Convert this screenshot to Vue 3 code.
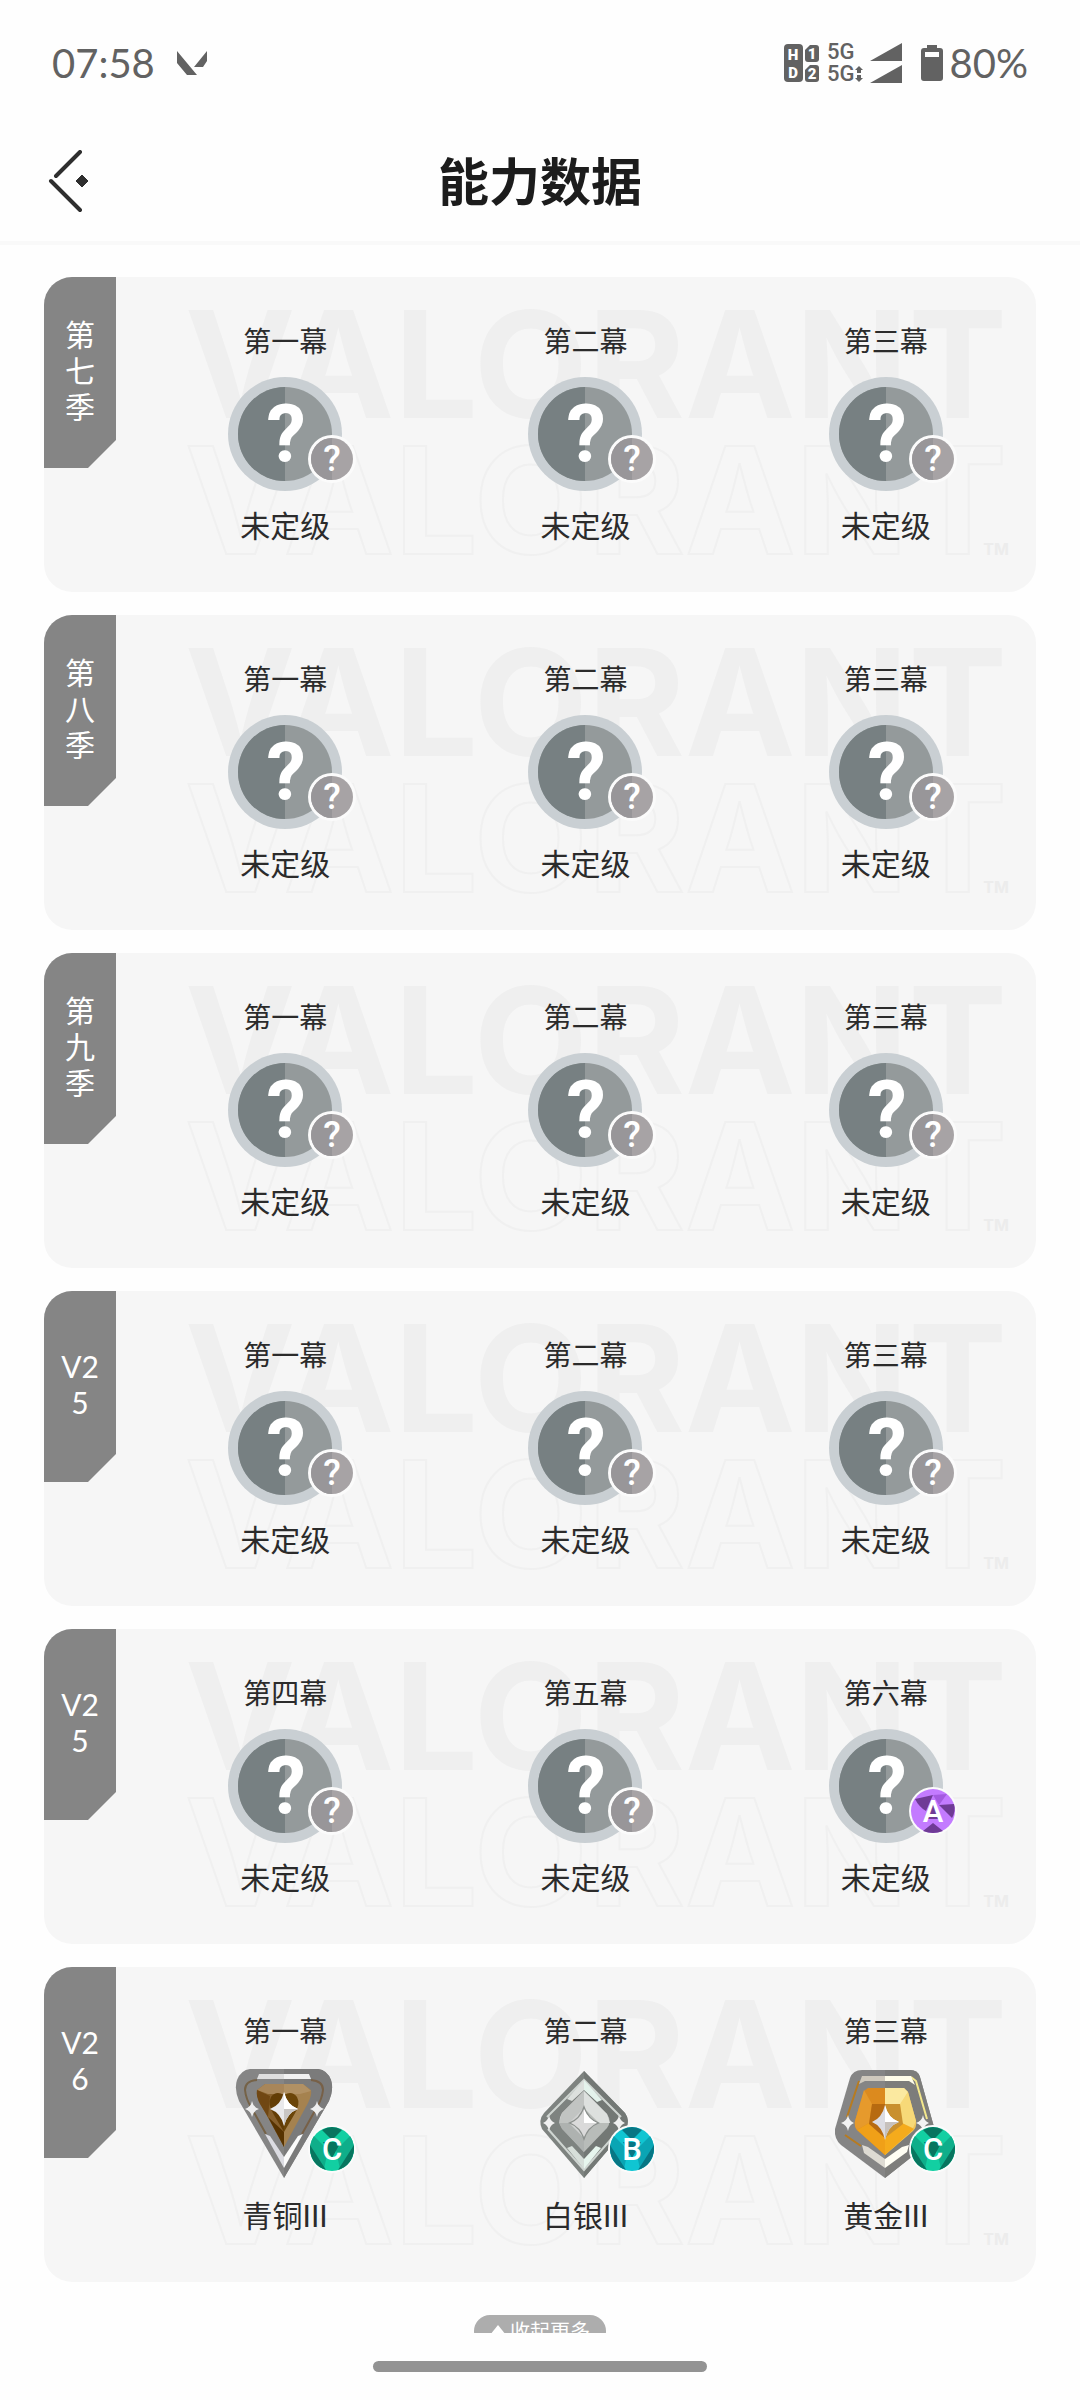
<script setup>
import { ref } from 'vue'

const unranked = (label, grade = '?') => ({ label, rank: 'none', name: '未定级', grade })

const seasons = ref([
  { lines: ['第', '七', '季'], acts: [unranked('第一幕'), unranked('第二幕'), unranked('第三幕')] },
  { lines: ['第', '八', '季'], acts: [unranked('第一幕'), unranked('第二幕'), unranked('第三幕')] },
  { lines: ['第', '九', '季'], acts: [unranked('第一幕'), unranked('第二幕'), unranked('第三幕')] },
  { lines: ['V2', '5'], acts: [unranked('第一幕'), unranked('第二幕'), unranked('第三幕')] },
  { lines: ['V2', '5'], acts: [unranked('第四幕'), unranked('第五幕'), unranked('第六幕', 'A')] },
  {
    lines: ['V2', '6'],
    acts: [
      { label: '第一幕', rank: 'bronze', name: '青铜III', grade: 'C' },
      { label: '第二幕', rank: 'silver', name: '白银III', grade: 'B' },
      { label: '第三幕', rank: 'gold', name: '黄金III', grade: 'C' },
    ],
  },
])

// 评级徽章配色：底色 / 深色切面 / 亮色切面
const gradeColors = {
  A: { base: '#a45be0', dark: '#6f3b96', light: '#c37bff' },
  B: { base: '#0aa5b4', dark: '#087684', light: '#10c5d2' },
  C: { base: '#0fae8a', dark: '#08755f', light: '#12cfa2' },
}
</script>

<template>
  <div class="page">
    <div class="status">
      <div class="status__group">
        <span class="status__text">07:58</span>
        <svg class="status__app" viewBox="0 0 30 24" aria-hidden="true">
          <path d="M0 0 20 24H10L0 12ZM30 0V10L26 16H17Z" />
        </svg>
      </div>
      <div class="status__group status__group--right">
        <svg class="status__hd" viewBox="0 0 36 40" aria-hidden="true">
          <rect x="0" y="1" width="19" height="38" rx="4" />
          <path d="M26 2h6q3 0 3 3v11q0 3-3 3h-8q-3 0-3-3V7Z" />
          <path d="M26 22h6q3 0 3 3v11q0 3-3 3h-8q-3 0-3-3v-9Z" />
          <text x="9" y="17">H</text>
          <text x="9" y="35">D</text>
          <text x="28" y="16">1</text>
          <text x="28" y="36">2</text>
        </svg>
        <div class="status__nets">
          <span>5G</span>
          <span>
            5G
            <svg class="status__arrows" viewBox="0 0 8 16" aria-hidden="true">
              <path d="M4 0 8 4H6V7H2V4H0ZM4 16 0 12H2V9H6V12H8Z" />
            </svg>
          </span>
        </div>
        <svg class="status__signal" viewBox="0 0 32 40" aria-hidden="true">
          <path d="M32 0V18H0ZM32 22V40H0Z" />
        </svg>
        <svg class="status__battery" viewBox="0 0 22 36" aria-hidden="true">
          <path fill-rule="evenodd" d="M6 0H16V3H19Q22 3 22 6V33Q22 36 19 36H3Q0 36 0 33V6Q0 3 3 3H6ZM4 7V12H18V7Z" />
        </svg>
        <span class="status__text">80%</span>
      </div>
    </div>

    <header class="header">
      <button class="header__back" type="button" aria-label="返回">
        <svg viewBox="0 0 44 64" aria-hidden="true">
          <path d="M32 2 8 26M3 31 32 60" fill="none" stroke="#2e2e2e" stroke-width="4" stroke-linecap="round" />
          <path d="M34 25 40 31 34 37 28 31Z" fill="#2e2e2e" stroke="#2e2e2e" stroke-linejoin="round" />
        </svg>
      </button>
      <h1 class="header__title">能力数据</h1>
    </header>

    <main class="content">
      <section v-for="(season, i) in seasons" :key="i" class="season">
        <svg class="season__mark" viewBox="0 0 992 315" aria-hidden="true">
          <text x="552" y="141" class="mark mark--solid">VALORANT</text>
          <text x="552" y="277" class="mark mark--line">VALORANT</text>
          <text x="952" y="278" class="mark mark--tm">TM</text>
        </svg>
        <h2 class="season__tag">
          <span v-for="line in season.lines" :key="line">{{ line }}</span>
        </h2>
        <ul class="season__acts">
          <li v-for="act in season.acts" :key="act.label" class="act">
            <span class="act__label">{{ act.label }}</span>
            <div class="act__rank">
              <svg v-if="act.rank === 'none'" class="act__icon" viewBox="0 0 114 114" aria-hidden="true">
                <circle cx="57" cy="57" r="57" fill="#c9cfd3" />
                <circle cx="57" cy="57" r="47" fill="#949a9b" />
                <path d="M57 10a47 47 0 0 0 0 94Z" fill="#778082" />
                <text x="58" y="84" class="mystery">?</text>
              </svg>

              <svg v-else-if="act.rank === 'bronze'" class="act__icon" viewBox="0 0 114 114" aria-hidden="true">
                <path d="M22 2H90Q99 3 103 13Q106 22 101 34L56 111 11 34Q6 22 9 13Q13 3 22 2Z" fill="#858585" />
                <path d="M56 2H90Q99 3 103 13Q106 22 101 34L56 111Z" fill="#7b7b7b" />
                <path d="M29 13Q17 14 17 23Q18 32 23 40L38 67" fill="none" stroke="#756247" stroke-width="2" />
                <path d="M83 13Q95 14 95 23Q94 32 89 40L74 67" fill="none" stroke="#776047" stroke-width="2" />
                <path d="M31 7H56V12H29Z" fill="#dedede" />
                <path d="M56 7H81L83 12H56Z" fill="#f1f1f1" />
                <path d="M37 67 42 69 56 90V101Z" fill="#dcdce2" />
                <path d="M75 67 70 69 56 90V101Z" fill="#fbfbfb" />
                <path d="M37 17H56V80L32 36Q28 28 29 23Z" fill="#87602c" />
                <path d="M56 17H75L83 23Q84 28 80 36L56 80Z" fill="#a5824f" />
                <path d="M37 17H75L83 24 72 27H40L29 23Z" fill="#b6976d" opacity=".7" />
                <path d="M29 23 42 29 40 50 32 37Q28 30 29 23Z" fill="#704713" />
                <path d="M56 28Q48 23 43 30Q39 37 46 48L56 65Z" fill="#633d05" />
                <path d="M56 28Q64 23 69 30Q73 37 66 48L56 65Z" fill="#6b4508" />
                <path d="M56 65V80L40 50Z" fill="#573300" />
                <path d="M56 25Q59 38 70 42Q59 46 56 59Q53 46 42 42Q53 38 56 25Z" fill="#e9e9eb" />
                <path d="M56 25Q59 38 70 42H56Z" fill="#fff" />
                <path d="M56 42H70Q59 46 56 59Z" fill="#c9c6c4" />
                <path d="M24 34Q25 40 31 42Q25 44 24 50Q23 44 17 42Q23 40 24 34ZM89 34Q90 40 96 42Q90 44 89 50Q88 44 82 42Q88 40 89 34Z" fill="#efefef" />
              </svg>

              <svg v-else-if="act.rank === 'silver'" class="act__icon" viewBox="0 0 114 114" aria-hidden="true">
                <path d="M56 4 97 46Q102 53 98 62L56 111 14 62Q10 53 16 46Z" fill="#7e8380" />
                <path d="M56 4 97 46Q102 53 98 62L56 111Z" fill="#737875" />
                <path d="M19 50 56 13 93 50M20 62 56 103 92 62" fill="none" stroke="#cfd5d1" stroke-width="2" />
                <path d="M56 13V23L44 34 39 32Z" fill="#dce0dd" />
                <path d="M56 13V23L69 35 74 33Z" fill="#e4f3ec" />
                <path d="M39 81 44 79 56 92V102Z" fill="#d7dfda" />
                <path d="M73 81 68 79 56 92V102Z" fill="#e7f6ee" />
                <path d="M56 24 79 47Q84 54 79 61L56 85Z" fill="#b8bcb9" />
                <path d="M56 24 34 46Q29 54 34 61L56 85Z" fill="#d1d3d2" />
                <path d="M56 24 34 46 31 56H41L56 41Z" fill="#c1c4c2" />
                <path d="M56 24 79 47 82 56H71L56 41Z" fill="#dde0de" />
                <path d="M31 56H41L56 71V85L34 62Z" fill="#aeb2b0" />
                <path d="M56 38Q60 52 72 56Q60 60 56 74Q52 60 40 56Q52 52 56 38Z" fill="#8c918e" />
                <path d="M56 42Q60 52 69 56Q60 60 56 70Q52 60 43 56Q52 52 56 42Z" fill="#dadada" />
                <path d="M56 42Q60 52 69 56H56Z" fill="#fff" />
                <path d="M21 48Q22 54 27 56Q22 58 21 64Q20 58 15 56Q20 54 21 48ZM91 48Q92 54 97 56Q92 58 91 64Q90 58 85 56Q90 54 91 48Z" fill="#f0f0f0" />
              </svg>

              <svg v-else class="act__icon" viewBox="0 0 114 114" aria-hidden="true">
                <path d="M33 3H81Q89 3 91 10L105 60Q106 69 99 77L56 111 12 78Q5 72 6 62L21 11Q24 3 33 3Z" fill="#858585" />
                <path d="M56 3H81Q89 3 91 10L105 60Q106 69 99 77L56 111Z" fill="#7d7d7b" />
                <path d="M30 14 18 50M16 68 32 79" fill="none" stroke="#b77b20" stroke-width="2" />
                <path d="M82 10 87 14 98 52" fill="none" stroke="#f4e88c" stroke-width="2" />
                <path d="M33 9H56V14H36L30 17Z" fill="#cfc9bd" />
                <path d="M56 9H82L86 18 80 14H56Z" fill="#fffdea" />
                <path d="M33 78 39 80 56 92V101L35 86Z" fill="#dedbd3" />
                <path d="M80 78 73 80 56 92V101L78 85Z" fill="#fffef4" />
                <path d="M39 21H56V88L28 63Q25 59 26 54L35 24Z" fill="#dc8a1e" />
                <path d="M56 21H75L79 25 87 54Q88 60 84 64L56 88Z" fill="#f0c55a" />
                <path d="M56 21H75L79 25 72 37H56Z" fill="#fbe9a0" />
                <path d="M79 25 87 54 84 61 73 56 71 37Z" fill="#f7d978" />
                <path d="M35 23 43 37 40 56 28 63Q25 59 26 54Z" fill="#e69a2c" />
                <path d="M28 63 40 56 56 71V88Z" fill="#f0a018" />
                <path d="M56 71 73 56 85 62 56 88Z" fill="#f5ab1c" />
                <path d="M43 37H56V71L40 57Z" fill="#b76a10" />
                <path d="M56 37H71L74 57 56 71Z" fill="#c9902e" />
                <path d="M56 38Q59 51 70 55Q59 59 56 73Q53 59 43 55Q53 51 56 38Z" fill="#dcdce2" />
                <path d="M56 38Q59 51 70 55H56Z" fill="#fff" />
                <path d="M56 55H70Q59 59 56 73Z" fill="#c7c1bc" />
                <path d="M19 48Q20 54 25 56Q20 58 19 64Q18 58 12 56Q18 54 19 48ZM94 48Q95 54 100 56Q95 58 94 64Q93 58 87 56Q93 54 94 48Z" fill="#f2f2f2" />
              </svg>

              <svg class="act__grade" viewBox="0 0 48 48" aria-hidden="true">
                <circle cx="24" cy="24" r="24" fill="#fbfbfb" />
                <template v-if="act.grade === '?'">
                  <circle cx="24" cy="24" r="21" fill="#a7a3a5" />
                  <path d="M24 3a21 21 0 0 0 0 42Z" fill="#989699" />
                  <text x="24" y="36" class="grade-mystery">?</text>
                </template>
                <template v-else>
                  <circle cx="24" cy="24" r="22" :fill="gradeColors[act.grade].light" />
                  <template v-if="act.grade === 'A'">
                    <path d="M6 12 24 8 17 24Q10 20 6 12Z" :fill="gradeColors.A.dark" />
                    <path d="M30 18 45 17Q47 24 43 31Z" :fill="gradeColors.A.dark" />
                    <path d="M14 44 24 36 34 44Q24 48 14 44Z" :fill="gradeColors.A.dark" />
                    <path d="M24 8 38 7 30 18Z" :fill="gradeColors.A.base" />
                    <path d="M24 15 30 32H18Z" :fill="gradeColors.A.dark" />
                  </template>
                  <template v-else>
                    <path d="M6 11 20 25 16 44Q3 38 2 24Q2 17 6 11ZM42 11 28 25 32 44Q45 38 46 24Q46 17 42 11Z" :fill="gradeColors[act.grade].base" />
                    <path d="M14 5 24 15 34 5Q24-1 14 5ZM2 20 18 45Q3 40 2 24ZM46 20 30 45Q45 40 46 24Z" :fill="gradeColors[act.grade].dark" />
                    <path d="M15 17H33L24 33Z" :fill="gradeColors[act.grade].dark" />
                  </template>
                  <text x="24" y="35" class="grade-letter">{{ act.grade }}</text>
                </template>
              </svg>
            </div>
            <span class="act__name">{{ act.name }}</span>
          </li>
        </ul>
      </section>

      <button class="collapse" type="button">
        <svg class="collapse__arrow" viewBox="0 0 16 12" aria-hidden="true"><path d="M8 0 16 10H0Z" /></svg>
        收起更多
      </button>
    </main>

    <div class="home"><span class="home__bar"></span></div>
  </div>
</template>

<style>
body {
  margin: 0;
  background: #fefefe;
}
</style>

<style scoped>
.page {
  display: flex;
  flex-direction: column;
  height: 100vh;
  background: #fefefe;
  color: #2b2b2b;
  font-family: Lato, 'Noto Sans CJK SC', sans-serif;
}

.status {
  display: flex;
  align-items: center;
  justify-content: space-between;
  box-sizing: border-box;
  height: 122px;
  padding: 4px 52px 0;
  flex-shrink: 0;
  color: #626262;
  fill: #626262;
}

.status__group {
  display: flex;
  align-items: center;
  gap: 22px;
}

.status__group--right {
  gap: 7px;
}

.status__text {
  font-size: 40px;
  line-height: 48px;
}

.status__app {
  width: 30px;
  height: 24px;
}

.status__hd {
  width: 36px;
  height: 40px;
}

.status__hd text {
  fill: #fff;
  font: 900 15px Roboto, sans-serif;
  text-anchor: middle;
}

.status__nets {
  display: flex;
  flex-direction: column;
  font: 500 22px/22px Roboto, sans-serif;
}

.status__nets span {
  display: flex;
  align-items: center;
}

.status__arrows {
  width: 8px;
  height: 16px;
}

.status__signal {
  width: 32px;
  height: 40px;
}

.status__battery {
  width: 22px;
  height: 36px;
  margin-left: 12px;
}

.header {
  display: grid;
  grid-template-columns: 44px 1fr 44px;
  align-items: center;
  height: 119px;
  padding: 0 48px;
  flex-shrink: 0;
  border-bottom: 4px solid #f9f9f9;
}

.header__back {
  padding: 0;
  border: 0;
  background: none;
  cursor: pointer;
}

.header__back svg {
  display: block;
  width: 44px;
  height: 64px;
}

.header__title {
  margin: 0;
  color: #1c1c1c;
  font-size: 51px;
  font-weight: 700;
  line-height: 60px;
  text-align: center;
}

.content {
  display: flex;
  flex: 1;
  flex-direction: column;
  gap: 23px;
  min-height: 0;
  padding: 32px 44px 0;
  overflow-y: auto;
  scrollbar-width: none;
}

.season {
  position: relative;
  display: flex;
  align-items: flex-start;
  flex-shrink: 0;
  gap: 19px;
  overflow: hidden;
  border-radius: 28px;
  background: #f6f6f6;
}

.season__mark {
  position: absolute;
  inset: 0;
  width: 100%;
  height: 100%;
}

.mark {
  font-family: Inter, sans-serif;
  font-size: 148px;
  font-weight: 700;
  text-anchor: middle;
}

.mark--solid {
  fill: #efefef;
}

.mark--line {
  fill: none;
  stroke: #f0f0f0;
  stroke-width: 2;
}

.mark--tm {
  fill: #ececec;
  font-size: 16px;
}

.season__tag {
  position: relative;
  display: flex;
  flex-direction: column;
  align-items: center;
  justify-content: center;
  box-sizing: border-box;
  width: 72px;
  height: 191px;
  margin: 0;
  padding-bottom: 6px;
  background: #858585;
  clip-path: polygon(0 0, 100% 0, 100% 163px, 44px 100%, 0 100%);
  color: #fff;
  font-size: 30px;
  font-weight: 400;
  line-height: 36px;
}

.season__acts {
  position: relative;
  display: flex;
  flex: 1;
  margin: 0;
  padding: 44px 0 49px;
  list-style: none;
}

.act {
  display: flex;
  flex: 1;
  flex-direction: column;
  align-items: center;
  gap: 16px;
}

.act__label {
  font-size: 28px;
  line-height: 40px;
}

.act__rank {
  position: relative;
  width: 114px;
  height: 114px;
}

.act__icon {
  display: block;
  width: 100%;
  height: 100%;
}

.mystery {
  fill: #fff;
  stroke: #fff;
  stroke-width: 2;
  font: 500 78px Roboto, sans-serif;
  text-anchor: middle;
}

.act__grade {
  position: absolute;
  top: 58px;
  right: -14px;
  width: 48px;
  height: 48px;
}

.grade-mystery {
  fill: #fff;
  font: 500 36px Roboto, sans-serif;
  text-anchor: middle;
}

.grade-letter {
  fill: #fff;
  font: 500 31px Roboto, sans-serif;
  text-anchor: middle;
}

.act__name {
  font-size: 30px;
  line-height: 36px;
}

.collapse {
  display: flex;
  align-items: center;
  align-self: center;
  flex-shrink: 0;
  gap: 4px;
  height: 32px;
  margin-top: 10px;
  padding: 0 16px;
  border: 0;
  border-radius: 16px;
  background: #adadad;
  color: #fff;
  font-family: inherit;
  font-size: 20px;
  line-height: 32px;
  cursor: pointer;
}

.collapse__arrow {
  width: 16px;
  height: 12px;
  fill: #fff;
}

.home {
  display: flex;
  justify-content: center;
  flex-shrink: 0;
  height: 39px;
  padding-top: 28px;
  background: #fefefe;
}

.home__bar {
  width: 31%;
  height: 11px;
  border-radius: 6px;
  background: #939393;
}
</style>
